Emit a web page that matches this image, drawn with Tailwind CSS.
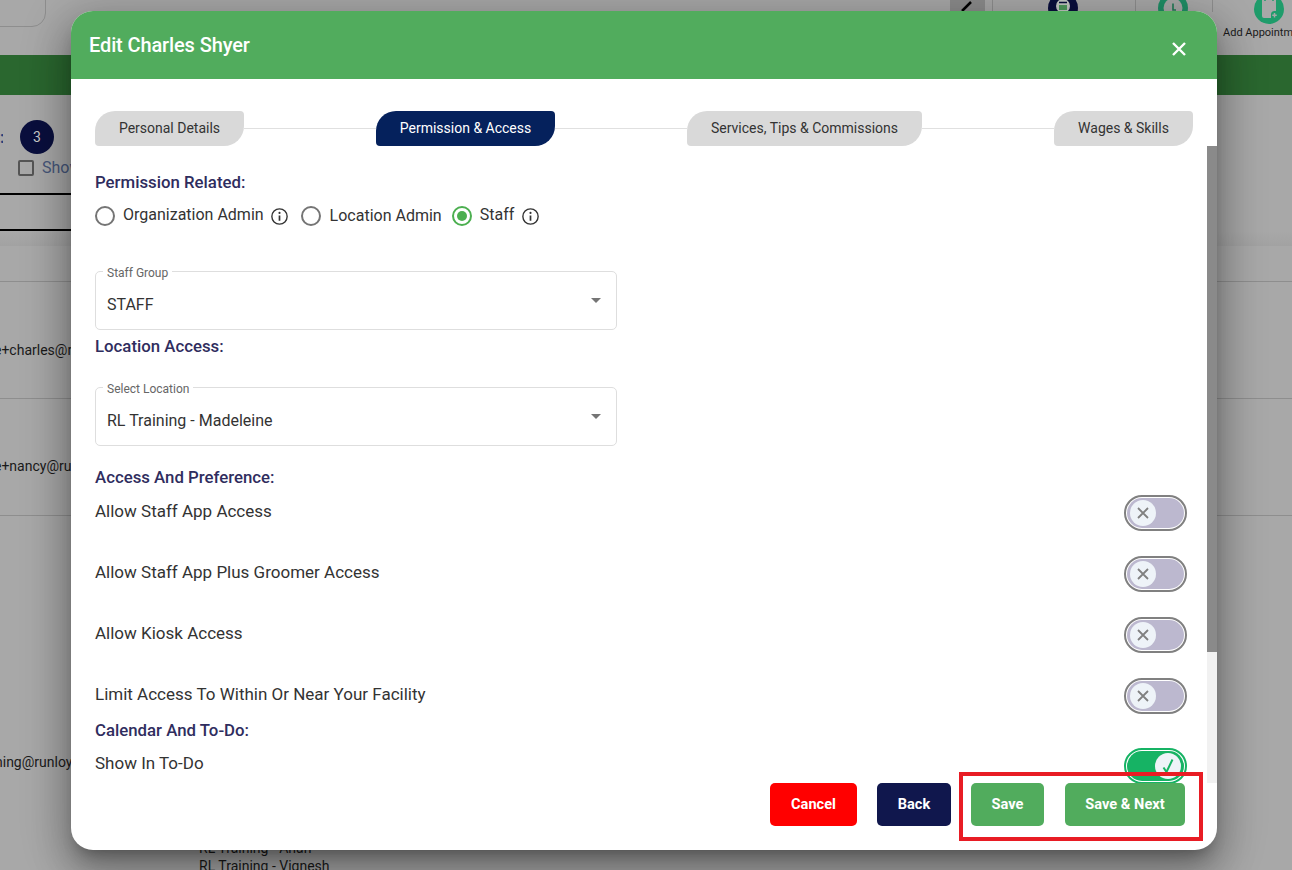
<!DOCTYPE html>
<html lang="en">
<head>
<meta charset="utf-8">
<title>Edit Charles Shyer</title>
<script src="https://cdn.jsdelivr.net/npm/@tailwindcss/browser@4"></script>
</head>
<body class="m-0 bg-[#a8a8a8] font-['Roboto',sans-serif]">
<div class="relative w-[1292px] h-[870px] overflow-hidden bg-[#a8a8a8]">

  <!-- page behind the dialog -->
  <header class="relative h-[55px]">
    <div class="absolute left-[-40px] top-[-20px] w-[86px] h-[47px] rounded-[14px] border border-[#8e8e8e]"></div>
    <div class="absolute left-[950px] top-0 w-[35px] h-[12px] bg-[#8c8c8c]">
      <svg viewBox="0 0 35 12" class="w-[35px] h-[12px]"><path d="M12 11 L21 2" stroke="#000" stroke-width="2.5" /></svg>
    </div>
    <div class="absolute left-[992px] top-0 w-px h-[12px] bg-[#8e8e8e]"></div>
    <svg viewBox="0 0 30 30" class="absolute left-[1048px] top-[-7px] w-[30px] h-[30px]"><circle cx="15" cy="15" r="15" fill="#0a0f3d"/><circle cx="15" cy="13" r="7" fill="#c4c8c4"/><path d="M11 12h8v5h-8z" fill="#4f9a5c"/><path d="M11 9.5h8" stroke="#0a0f3d" stroke-width="1.5"/></svg>
    <div class="absolute left-[1135px] top-0 w-px h-[12px] bg-[#8e8e8e]"></div>
    <svg viewBox="0 0 30 30" class="absolute left-[1158px] top-[-7px] w-[30px] h-[30px]"><circle cx="15" cy="15" r="15" fill="#1f8f66"/><circle cx="15" cy="15" r="9.5" fill="#a8a8a8"/><path d="M15 10.5v6.5h3" fill="none" stroke="#1f7a55" stroke-width="1.6"/></svg>
    <div class="absolute left-[1212px] top-0 w-px h-[12px] bg-[#8e8e8e]"></div>
    <svg viewBox="0 0 30 30" class="absolute left-[1254px] top-[-6px] w-[30px] h-[30px]"><circle cx="15" cy="15" r="15" fill="#1f9c6b"/><path d="M8 6h14v11h-1.5a3.5 3.5 0 0 0-3.500 3.500V24H10a2 2 0 0 1-2-2z" fill="#a8a8a8"/><path d="M20.500 19v4.500M18.250 21.250h4.500" stroke="#a8a8a8" stroke-width="1.500"/><path d="M11 3v4M19 3v4" stroke="#1f9c6b" stroke-width="1.500"/></svg>
    <div class="absolute left-[1223px] top-[26px] text-[11px] leading-[14px] text-[#1a1a1a] whitespace-nowrap">Add Appointment</div>
  </header>
  <div class="h-[40px] bg-[#2a672f]"></div>

  <section class="relative h-[151px]">
    <div class="absolute left-0 top-[36px] w-[3px] h-[13px] text-[#23407a] text-[16px] leading-[13px] font-bold overflow-hidden">:</div>
    <div class="absolute left-[20px] top-[25px] w-[34px] h-[34px] rounded-full bg-[#0a0f3d] text-[#c9c9c9] text-[14px] leading-[34px] text-center">3</div>
    <div class="absolute left-[18px] top-[65px] flex items-center gap-[8px]">
      <span class="block w-[16px] h-[16px] border-2 border-[#555555] rounded-[2px]"></span>
      <span class="text-[16px] leading-[16px] text-[#46567a] whitespace-nowrap">Show</span>
    </div>
    <div class="absolute left-0 top-[98px] w-[1000px] h-[2px] bg-black"></div>
    <div class="absolute left-0 top-[134px] w-[1000px] h-[2px] bg-black"></div>
    <div class="absolute left-0 top-[136px] w-full h-[15px] bg-linear-to-b from-[#a8a8a8] to-[#a2a2a2]"></div>
  </section>

  <div class="h-[35px]"></div>
  <div class="h-[118px] border-y border-[#8e8e8e] pt-[58px] text-[14px] leading-[20px] text-[#1a1a1a] whitespace-nowrap"><span class="block ml-[-6px]">e+charles@runloyal.com</span></div>
  <div class="h-[117px] border-b border-[#8e8e8e] pt-[57px] text-[14px] leading-[20px] text-[#1a1a1a] whitespace-nowrap"><span class="block ml-[-6px]">e+nancy@runloyal.com</span></div>
  <div class="pt-[236px] text-[14px] leading-[20px] text-[#1a1a1a] whitespace-nowrap">
    <span class="block ml-[-5px]">ning@runloyal.com</span>
    <div class="ml-[199px] mt-[67px] leading-[18px]">
      <div>RL Training - Anah</div>
      <div>RL Training - Vignesh</div>
    </div>
  </div>

  <!-- dialog -->
  <div class="absolute left-[71px] top-[11px] w-[1146px] h-[839px] rounded-[22px] bg-white overflow-hidden flex flex-col shadow-[0_11px_15px_-7px_rgba(0,0,0,0.3),0_24px_38px_3px_rgba(0,0,0,0.2),0_9px_46px_8px_rgba(0,0,0,0.2)]">
    <div class="h-[68px] shrink-0 bg-[#51ac5d] flex items-center justify-between pl-[18px] pr-[30px]">
      <h2 class="text-[20px] leading-[24px] font-medium tracking-[-0.12px] text-white">Edit Charles Shyer</h2>
      <svg viewBox="0 0 16 16" class="w-[16px] h-[16px] mt-[8px]"><path d="M2 2 L14 14 M14 2 L2 14" stroke="#fff" stroke-width="2.4"/></svg>
    </div>

    <div class="h-[67px] shrink-0 pt-[32px] px-[24px]">
      <div class="flex items-center">
        <div class="w-[149px] h-[35px] shrink-0 bg-[#d9d9d9] text-[#333333] text-[14px] flex items-center justify-center rounded-tl-[20px] rounded-br-[20px] rounded-tr-[4px] rounded-bl-[4px]">Personal Details</div>
        <div class="flex-1 h-px bg-[#e0e0e0]"></div>
        <div class="w-[179px] h-[35px] shrink-0 bg-[#05215c] text-white text-[14px] flex items-center justify-center rounded-tl-[20px] rounded-br-[20px] rounded-tr-[4px] rounded-bl-[4px]">Permission &amp; Access</div>
        <div class="flex-1 h-px bg-[#e0e0e0]"></div>
        <div class="w-[235px] h-[35px] shrink-0 bg-[#d9d9d9] text-[#333333] text-[14px] flex items-center justify-center rounded-tl-[20px] rounded-br-[20px] rounded-tr-[4px] rounded-bl-[4px]">Services, Tips &amp; Commissions</div>
        <div class="flex-1 h-px bg-[#e0e0e0]"></div>
        <div class="w-[139px] h-[35px] shrink-0 bg-[#d9d9d9] text-[#333333] text-[14px] flex items-center justify-center rounded-tl-[20px] rounded-br-[20px] rounded-tr-[4px] rounded-bl-[4px]">Wages &amp; Skills</div>
      </div>
    </div>

    <div class="h-[637px] shrink-0 flex overflow-hidden">
      <div class="flex-1 pl-[24px] pr-[20px] pt-[24px] text-[16px] leading-[24px] text-[#333333]">
        <h3 class="h-[24px] text-[16.8px] font-medium text-[#2f2d5e]">Permission Related:</h3>

        <div class="mt-[10px] flex items-center h-[24px]">
          <span class="block w-[20px] h-[20px] rounded-full border-2 border-[#757575]"></span>
          <span class="ml-[8px] mt-[-2px] whitespace-nowrap">Organization Admin</span>
          <svg viewBox="0 0 16 16" class="ml-[7px] w-[17px] h-[17px]"><circle cx="8" cy="8" r="7.2" fill="none" stroke="#333" stroke-width="1.3"/><path d="M8 7v5" stroke="#333" stroke-width="1.6"/><circle cx="8" cy="4.6" r="1" fill="#333"/></svg>
          <span class="ml-[13px] block w-[20px] h-[20px] rounded-full border-2 border-[#757575]"></span>
          <span class="ml-[9px] whitespace-nowrap">Location Admin</span>
          <span class="ml-[10px] flex items-center justify-center w-[20px] h-[20px] rounded-full border-2 border-[#4caf50]"><span class="block w-[10px] h-[10px] rounded-full bg-[#4caf50]"></span></span>
          <span class="ml-[8px] mt-[-2px] whitespace-nowrap">Staff</span>
          <svg viewBox="0 0 16 16" class="ml-[8px] w-[17px] h-[17px]"><circle cx="8" cy="8" r="7.2" fill="none" stroke="#333" stroke-width="1.3"/><path d="M8 7v5" stroke="#333" stroke-width="1.6"/><circle cx="8" cy="4.6" r="1" fill="#333"/></svg>
        </div>

        <div class="relative mt-[43px] w-[522px] h-[59px] border border-[#dedede] rounded-[5px] pl-[11px] pt-[21px]">
          <span class="absolute left-[7px] top-[-6px] bg-white px-[4px] text-[12px] leading-[14px] text-[#666666]">Staff Group</span>
          <span>STAFF</span>
          <svg viewBox="0 0 10 5" class="absolute right-[15px] top-[26px] w-[10px] h-[5px]"><path d="M0 0h10L5 5z" fill="#757575"/></svg>
        </div>

        <h3 class="mt-[4px] h-[24px] text-[16.8px] font-medium text-[#2f2d5e]">Location Access:</h3>

        <div class="relative mt-[29px] w-[522px] h-[59px] border border-[#dedede] rounded-[5px] pl-[11px] pt-[21px]">
          <span class="absolute left-[7px] top-[-6px] bg-white px-[4px] text-[12px] leading-[14px] text-[#666666]">Select Location</span>
          <span>RL Training - Madeleine</span>
          <svg viewBox="0 0 10 5" class="absolute right-[15px] top-[26px] w-[10px] h-[5px]"><path d="M0 0h10L5 5z" fill="#757575"/></svg>
        </div>

        <h3 class="mt-[19px] h-[24px] text-[16.8px] font-medium text-[#2f2d5e]">Access And Preference:</h3>

        <div class="mt-[6px] h-[36px] flex justify-between text-[17px]">
          <span class="mt-[4px]">Allow Staff App Access</span>
          <span class="block w-[63px] h-[36px] rounded-full border-2 border-[#808080] p-px"><span class="flex items-center w-full h-full rounded-full bg-[#bcb8cf] pl-[3px]"><span class="flex items-center justify-center w-[26px] h-[26px] rounded-full bg-[#eef3f8]"><svg viewBox="0 0 12 12" class="w-[12px] h-[12px]"><path d="M1 1 L11 11 M11 1 L1 11" stroke="#808080" stroke-width="1.8"/></svg></span></span></span>
        </div>
        <div class="mt-[25px] h-[36px] flex justify-between text-[17px]">
          <span class="mt-[4px]">Allow Staff App Plus Groomer Access</span>
          <span class="block w-[63px] h-[36px] rounded-full border-2 border-[#808080] p-px"><span class="flex items-center w-full h-full rounded-full bg-[#bcb8cf] pl-[3px]"><span class="flex items-center justify-center w-[26px] h-[26px] rounded-full bg-[#eef3f8]"><svg viewBox="0 0 12 12" class="w-[12px] h-[12px]"><path d="M1 1 L11 11 M11 1 L1 11" stroke="#808080" stroke-width="1.8"/></svg></span></span></span>
        </div>
        <div class="mt-[25px] h-[36px] flex justify-between text-[17px]">
          <span class="mt-[4px]">Allow Kiosk Access</span>
          <span class="block w-[63px] h-[36px] rounded-full border-2 border-[#808080] p-px"><span class="flex items-center w-full h-full rounded-full bg-[#bcb8cf] pl-[3px]"><span class="flex items-center justify-center w-[26px] h-[26px] rounded-full bg-[#eef3f8]"><svg viewBox="0 0 12 12" class="w-[12px] h-[12px]"><path d="M1 1 L11 11 M11 1 L1 11" stroke="#808080" stroke-width="1.8"/></svg></span></span></span>
        </div>
        <div class="mt-[25px] h-[36px] flex justify-between text-[17px]">
          <span class="mt-[4px]">Limit Access To Within Or Near Your Facility</span>
          <span class="block w-[63px] h-[36px] rounded-full border-2 border-[#808080] p-px"><span class="flex items-center w-full h-full rounded-full bg-[#bcb8cf] pl-[3px]"><span class="flex items-center justify-center w-[26px] h-[26px] rounded-full bg-[#eef3f8]"><svg viewBox="0 0 12 12" class="w-[12px] h-[12px]"><path d="M1 1 L11 11 M11 1 L1 11" stroke="#808080" stroke-width="1.8"/></svg></span></span></span>
        </div>

        <h3 class="mt-[4px] h-[24px] text-[16.8px] font-medium text-[#2f2d5e]">Calendar And To-Do:</h3>

        <div class="mt-[6px] h-[36px] flex justify-between text-[17px]">
          <span class="mt-[3px]">Show In To-Do</span>
          <span class="block w-[63px] h-[36px] rounded-full border-2 border-[#16b364] p-px"><span class="flex items-center justify-end w-full h-full rounded-full bg-[#16b364] pr-[3px]"><span class="flex items-center justify-center w-[26px] h-[26px] rounded-full bg-[#eef3f8]"><svg viewBox="0 0 14 16" class="w-[14px] h-[16px]"><path d="M2.500 9.500 L5.500 14 L11.500 1.500" fill="none" stroke="#16b364" stroke-width="2"/></svg></span></span></span>
        </div>
      </div>
      <div class="w-[10px] shrink-0 bg-[#f1f1f1]">
        <div class="h-[506px] bg-[#8a8a8a]"></div>
      </div>
    </div>

    <div class="flex-1 flex items-start justify-end pr-[32px] text-[14.6px] font-bold text-white">
      <button class="w-[87px] h-[43px] rounded-[5px] bg-[#ff0000]">Cancel</button>
      <button class="ml-[20px] w-[74px] h-[43px] rounded-[5px] bg-[#10174d]">Back</button>
      <button class="ml-[20px] w-[73px] h-[43px] rounded-[5px] bg-[#51ac5d]">Save</button>
      <button class="ml-[21px] w-[120px] h-[43px] rounded-[5px] bg-[#51ac5d]">Save &amp; Next</button>
    </div>
  </div>

  <!-- annotation -->
  <div class="absolute left-[959px] top-[772px] w-[244px] h-[69px] border-[4px] border-[#e81c24]"></div>
</div>
</body>
</html>
